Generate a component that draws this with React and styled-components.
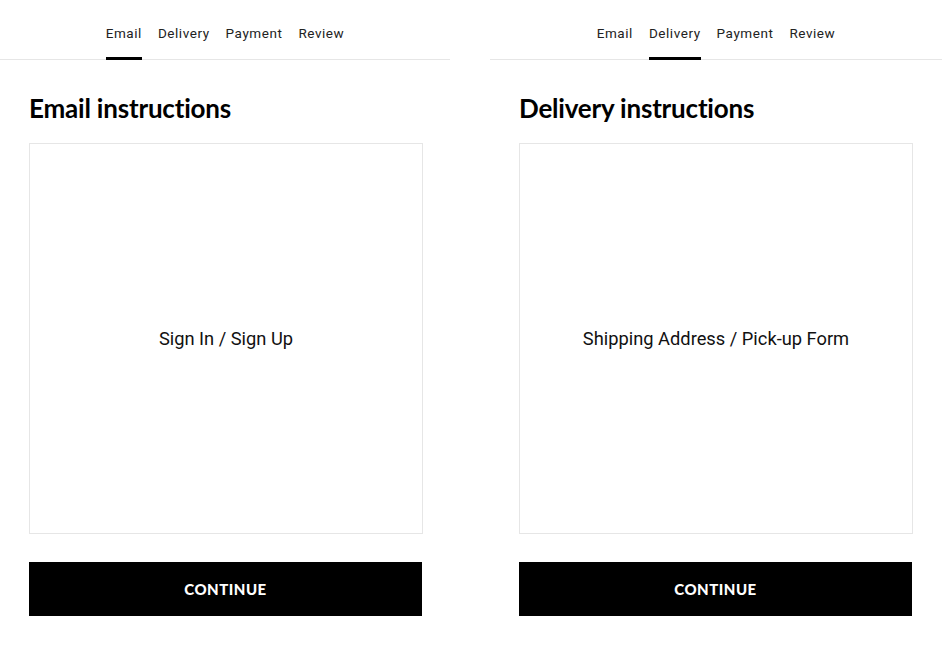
import React from 'react';
import styled, { createGlobalStyle } from 'styled-components';

const GlobalStyle = createGlobalStyle`
    html, body {
        margin: 0;
        padding: 0;
        background: #fff;
    }
    body {
        font-family: Roboto, "Liberation Sans", sans-serif;
        color: #000;
    }
`;

const Page = styled.div`
    display: grid;
    grid-template-columns: 450px 452px;
    column-gap: 40px;
    width: 942px;
`;

const Panel = styled.section`
    display: flex;
    flex-direction: column;
`;

const Tabs = styled.nav`
    display: flex;
    justify-content: center;
    gap: 16px;
    height: 59px;
    border-bottom: 1px solid #e6e6e6;
`;

const Tab = styled.div`
    display: flex;
    align-items: center;
    padding-top: 8px;
    font-family: Roboto, sans-serif;
    font-size: 13.5px;
    letter-spacing: 0.55px;
    color: #222;
    border-bottom: 3px solid ${p => (p.$active ? '#000' : 'transparent')};
    margin-bottom: -1px;
`;

const Body = styled.div`
    display: flex;
    flex-direction: column;
    align-items: flex-start;
    padding: 32px 0 0 29px;
`;

const Heading = styled.h2`
    margin: 0 0 19px;
    font-family: Lato, sans-serif;
    font-weight: 700;
    font-size: 26px;
    line-height: 32px;
    letter-spacing: -0.2px;
`;

const Slot = styled.div`
    display: flex;
    align-items: center;
    justify-content: center;
    box-sizing: border-box;
    width: 394px;
    height: 391px;
    border: 1px solid #e6e6e6;
    font-family: Roboto, sans-serif;
    font-size: 18.3px;
    color: #111;
`;

const Button = styled.button`
    margin-top: 28px;
    height: 54px;
    width: 393px;
    border: none;
    background: #000;
    color: #fff;
    font-family: Lato, sans-serif;
    font-weight: 900;
    font-size: 15px;
    letter-spacing: 0.5px;
    cursor: pointer;
`;

const steps = ['Email', 'Delivery', 'Payment', 'Review'];

const Checkout = ({ active, title, content }) => (
    <Panel>
        <Tabs>
            {steps.map(step => (
                <Tab key={step} $active={step === active}>{step}</Tab>
            ))}
        </Tabs>
        <Body>
            <Heading>{title}</Heading>
            <Slot>{content}</Slot>
            <Button>CONTINUE</Button>
        </Body>
    </Panel>
);

export default function App() {
    return (
        <>
            <GlobalStyle />
            <Page>
                <Checkout active="Email" title="Email instructions" content="Sign In / Sign Up" />
                <Checkout active="Delivery" title="Delivery instructions" content="Shipping Address / Pick-up Form" />
            </Page>
        </>
    );
}
